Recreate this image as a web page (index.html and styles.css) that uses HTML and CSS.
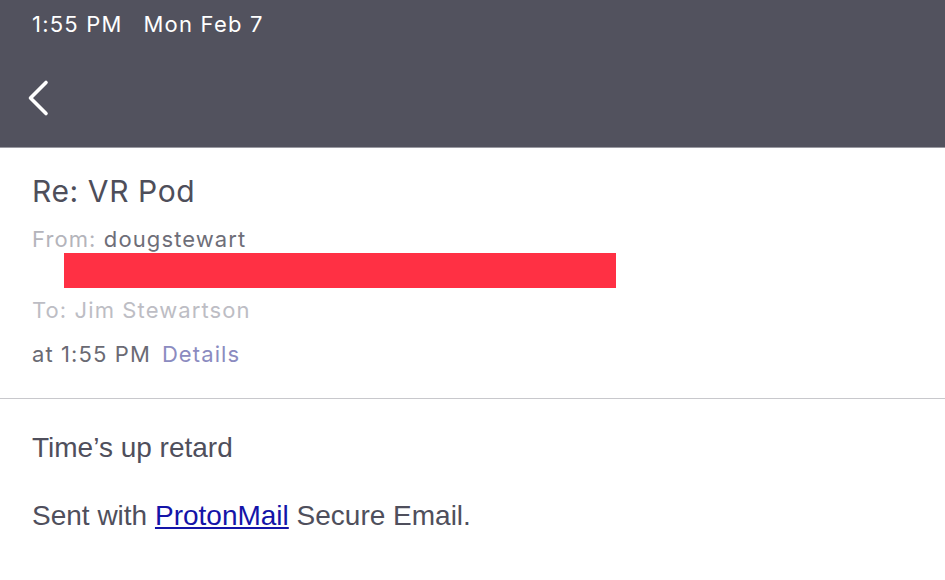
FILE: index.html
```html
<!DOCTYPE html>
<html>
<head>
<meta charset="utf-8">
<link rel="stylesheet" href="styles.css">
</head>
<body>
<header class="topbar">
  <div class="status"><span class="time">1:55 PM</span><span class="date">Mon Feb 7</span></div>
  <div class="nav">
    <svg class="back" width="30" height="40" viewBox="0 0 30 40"><path d="M21 4.5 L5.5 20 L21 35.5" fill="none" stroke="#fff" stroke-width="3.6" stroke-linecap="round" stroke-linejoin="round"/></svg>
  </div>
</header>
<section class="meta">
  <h1 class="subject">Re: VR Pod</h1>
  <div class="from"><span class="label">From:</span> <span class="sender">dougstewart</span></div>
  <div class="redact"></div>
  <div class="to">To: Jim Stewartson</div>
  <div class="when"><span class="at">at 1:55 PM</span><span class="details">Details</span></div>
</section>
<section class="body">
  <p class="line">Time’s up retard</p>
  <p class="line">Sent with <a class="link" href="#">ProtonMail</a> Secure Email.</p>
</section>
</body>
</html>
```
FILE: styles.css
```css
html, body { margin: 0; padding: 0; background: #fff; }
body { width: 945px; height: 580px; overflow: hidden; font-family: Inter, "Open Sans", "Liberation Sans", sans-serif; }
.topbar { background: #52525e; height: 147px; border-bottom: 1px solid #9a9aa2; }
.status { color: #fff; font-size: 22px; line-height: 26px; padding: 11px 0 0 32px; height: 32px; display: flex; gap: 21px; letter-spacing: 1.2px; }
.nav { padding: 35px 0 0 25px; }
.back { display: block; }
.meta { padding: 25px 32px 0; height: 251px; border-bottom: 1px solid #c8c8cc; box-sizing: border-box; }
.subject { margin: 0; font-weight: 400; font-size: 30px; color: #4e4e5a; line-height: 36px; letter-spacing: 0.6px; }
.from, .to, .when { font-size: 22px; line-height: 24px; letter-spacing: 1.1px; }
.from { margin-top: 18px; }
.label { color: #b4b4bb; }
.sender { color: #6e6e78; }
.redact { background: #ff3044; width: 552px; height: 35px; margin: 2px 0 0 32px; }
.to { color: #bdbdc4; margin-top: 10px; }
.when { margin-top: 20px; display: flex; gap: 11px; }
.at { color: #6a6a73; }
.details { color: #8b8bc0; }
.body { padding: 33px 32px 0; font-family: "Liberation Sans", Arial, sans-serif; font-size: 28px; color: #4f4f5c; }
.line { margin: 0 0 36px; line-height: 32px; }
.link { color: #1414a8; }
```
